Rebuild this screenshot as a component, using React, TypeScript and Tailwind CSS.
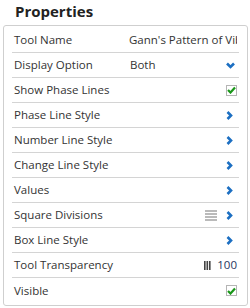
import type { ReactNode } from "react";

function ChevronRight() {
  return (
    <svg width="7" height="9" viewBox="0 0 7 9" className="shrink-0">
      <path d="M1.5 1 L5 4.5 L1.5 8" fill="none" stroke="#1c6fc2" strokeWidth="2.6" />
    </svg>
  );
}

function ChevronDown() {
  return (
    <svg width="9" height="7" viewBox="0 0 9 7" className="shrink-0">
      <path d="M1 1.5 L4.5 5 L8 1.5" fill="none" stroke="#1c6fc2" strokeWidth="2.6" />
    </svg>
  );
}

function Checkbox() {
  return (
    <div className="w-[11px] h-[11px] border border-[#b5b5b5] bg-white flex items-center justify-center">
      <svg width="9" height="8" viewBox="0 0 9 8">
        <path d="M1 4 L3.5 6.5 L8 1.5" fill="none" stroke="#1a971a" strokeWidth="2.2" />
      </svg>
    </div>
  );
}

function LinesIcon() {
  return (
    <svg width="12" height="11" viewBox="0 0 12 11" className="shrink-0">
      {[1, 4, 7, 10].map((y) => (
        <rect key={y} x="0" y={y - 0.5} width="12" height="1" fill="#777" />
      ))}
    </svg>
  );
}

function BarsIcon() {
  return (
    <svg width="7" height="9" viewBox="0 0 7 9" className="shrink-0">
      {[0, 2.5, 5].map((x) => (
        <rect key={x} x={x} y="0" width="1.6" height="9" fill="#444" />
      ))}
    </svg>
  );
}

const rows: { label: string; right: ReactNode }[] = [
  {
    label: "Tool Name",
    right: (
      <div className="ml-auto w-[108px] overflow-hidden whitespace-nowrap">
        Gann's Pattern of Vibration
      </div>
    ),
  },
  {
    label: "Display Option",
    right: (
      <div className="ml-auto w-[107px] flex items-center">
        <span>Both</span>
        <span className="ml-auto mr-[2px]">
          <ChevronDown />
        </span>
      </div>
    ),
  },
  { label: "Show Phase Lines", right: <div className="ml-auto"><Checkbox /></div> },
  { label: "Phase Line Style", right: <div className="ml-auto mr-[4px]"><ChevronRight /></div> },
  { label: "Number Line Style", right: <div className="ml-auto mr-[4px]"><ChevronRight /></div> },
  { label: "Change Line Style", right: <div className="ml-auto mr-[4px]"><ChevronRight /></div> },
  { label: "Values", right: <div className="ml-auto mr-[4px]"><ChevronRight /></div> },
  {
    label: "Square Divisions",
    right: (
      <div className="ml-auto mr-[4px] flex items-center gap-[9px]">
        <LinesIcon />
        <ChevronRight />
      </div>
    ),
  },
  { label: "Box Line Style", right: <div className="ml-auto mr-[4px]"><ChevronRight /></div> },
  {
    label: "Tool Transparency",
    right: (
      <div className="ml-auto flex items-center gap-[6px]">
        <BarsIcon />
        <span className="text-[#1f3560]">100</span>
      </div>
    ),
  },
  { label: "Visible", right: <div className="ml-auto"><Checkbox /></div> },
];

export default function App() {
  return (
    <div className="w-[250px] h-[308px] bg-white overflow-hidden font-['Open_Sans',sans-serif] text-[#333]">
      <h1 className="pl-[15px] pt-[1px] h-[25px] text-[15px] font-bold text-[#222] leading-[20px]">
        Properties
      </h1>
      <div className="ml-[3px] w-[245px] h-[281px] border border-[#cfcfcf] rounded-[3px] px-[8px] pt-[2px]">
        {rows.map((r, i) => (
          <div
            key={r.label}
            className={`h-[25px] flex items-center px-[2px] text-[11.5px] ${
              i < rows.length - 1 ? "border-b border-[#d4d4d4]" : ""
            }`}
          >
            <span className="whitespace-nowrap">{r.label}</span>
            {r.right}
          </div>
        ))}
      </div>
    </div>
  );
}
